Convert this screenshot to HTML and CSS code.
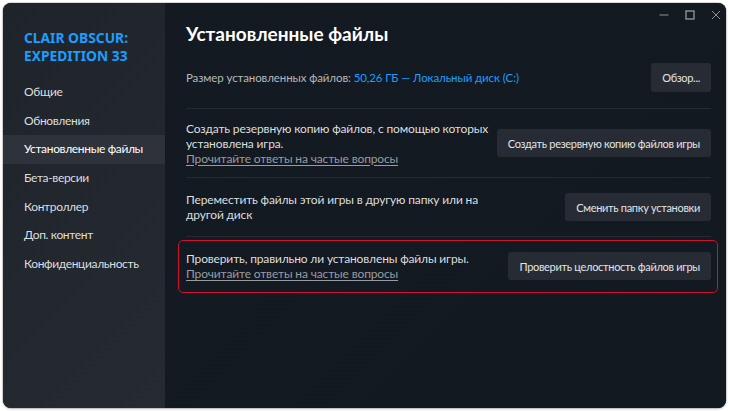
FILE: index.html
```html
<!DOCTYPE html>
<html lang="ru">
<head>
<meta charset="utf-8">
<title>Установленные файлы</title>
<link rel="stylesheet" href="styles.css">
</head>
<body>
<div class="window">
  <aside class="sidebar">
    <div class="game-title">CLAIR OBSCUR:<br>EXPEDITION 33</div>
    <nav class="nav">
      <div class="nav-item">Общие</div>
      <div class="nav-item">Обновления</div>
      <div class="nav-item active">Установленные файлы</div>
      <div class="nav-item">Бета-версии</div>
      <div class="nav-item">Контроллер</div>
      <div class="nav-item">Доп. контент</div>
      <div class="nav-item">Конфиденциальность</div>
    </nav>
  </aside>
  <main class="content">
    <div class="controls">
      <svg class="ctl" width="10" height="10" viewBox="0 0 10 10"><path d="M0.5 5h9" stroke="currentColor" stroke-width="1"/></svg>
      <svg class="ctl" width="10" height="10" viewBox="0 0 10 10"><rect x="1" y="1" width="8" height="8" fill="none" stroke="currentColor" stroke-width="1.4"/></svg>
      <svg class="ctl" width="10" height="10" viewBox="0 0 10 10"><path d="M1 1l8 8M9 1l-8 8" stroke="currentColor" stroke-width="1"/></svg>
    </div>
    <h1 class="page-title">Установленные файлы</h1>

    <div class="row row-size">
      <div class="row-text size-text">Размер установленных файлов: <span class="accent">50,26 ГБ — Локальный диск (C:)</span></div>
      <button class="btn">Обзор...</button>
    </div>

    <div class="row row-tight">
      <div class="row-text">
        <div>Создать резервную копию файлов, с помощью которых установлена игра.</div>
        <a class="faq">Прочитайте ответы на частые вопросы</a>
      </div>
      <button class="btn">Создать резервную копию файлов игры</button>
    </div>

    <div class="row">
      <div class="row-text">
        <div>Переместить файлы этой игры в другую папку или на другой диск</div>
      </div>
      <button class="btn">Сменить папку установки</button>
    </div>

    <div class="row row-last highlighted">
      <div class="row-text">
        <div>Проверить, правильно ли установлены файлы игры.</div>
        <a class="faq">Прочитайте ответы на частые вопросы</a>
      </div>
      <button class="btn">Проверить целостность файлов игры</button>
    </div>
  </main>
</div>
</body>
</html>
```
FILE: styles.css
```css
* { box-sizing: border-box; }
html, body {
  margin: 0;
  padding: 0;
  background: #ffffff;
}
body {
  font-family: Lato, Roboto, sans-serif;
  padding: 3px 4px 3px 3px;
}
.window {
  position: relative;
  display: flex;
  width: 723px;
  height: 405px;
  border-radius: 8px;
  overflow: hidden;
  background: #131a21;
  box-shadow: 0 0 0 1px rgba(0,0,0,0.12), 0 1px 3px rgba(0,0,0,0.2);
}
.sidebar {
  width: 162px;
  flex: none;
  background: linear-gradient(135deg, #1f232a 0%, #262a32 100%);
  padding-top: 26px;
}
.game-title {
  font-family: "Noto Sans", sans-serif;
  color: #1a9fff;
  font-weight: 700;
  font-size: 13.8px;
  line-height: 18px;
  padding-left: 21px;
}
.nav {
  margin-top: 13px;
  display: flex;
  flex-direction: column;
}
.nav-item {
  height: 28.67px;
  line-height: 28.67px;
  padding-left: 21px;
  color: #dcdedf;
  font-size: 12px;
  letter-spacing: -0.35px;
}
.nav-item.active {
  background: #2e323a;
  color: #ffffff;
}
.content {
  flex: 1;
  padding: 18px 15px 0 21px;
  background: linear-gradient(135deg, #141a22 0%, #121920 100%);
}
.controls {
  position: absolute;
  top: 7px;
  right: 5px;
  display: flex;
  gap: 16px;
  color: #8e9297;
}
.page-title {
  margin: 0;
  font-size: 19px;
  line-height: 26px;
  font-weight: 700;
  color: #ffffff;
}
.row {
  position: relative;
  display: flex;
  align-items: center;
  justify-content: space-between;
  padding: 14px 0;
  border-bottom: 1px solid #252b33;
  gap: 4px;
}
.row-size { padding: 16px 0; }
.row-tight { padding: 11.5px 0; }
.row-last { border-bottom: none; }
.row-text {
  max-width: 318px;
  color: #dcdedf;
  font-size: 12px;
  letter-spacing: -0.15px;
  line-height: 15px;
}
.size-text {
  max-width: none;
  color: #b4b8bc;
  font-size: 11.5px;
  letter-spacing: -0.1px;
}
.accent { color: #1a9fff; }
.faq {
  display: inline-block;
  color: #989ca1;
  text-decoration: underline;
  text-underline-offset: 2px;
}
.btn {
  flex: none;
  height: 28px;
  padding: 0 11px;
  border: none;
  border-radius: 3px;
  background: #272c34;
  color: #e2e4e6;
  font-family: inherit;
  font-size: 11px;
  letter-spacing: -0.3px;
}
.row-size .btn { height: 29px; }
.highlighted::after {
  content: "";
  position: absolute;
  top: 3px;
  bottom: 2px;
  left: -8px;
  right: -7px;
  border: 1.5px solid #d0132c;
  border-radius: 5px;
  pointer-events: none;
}
```
